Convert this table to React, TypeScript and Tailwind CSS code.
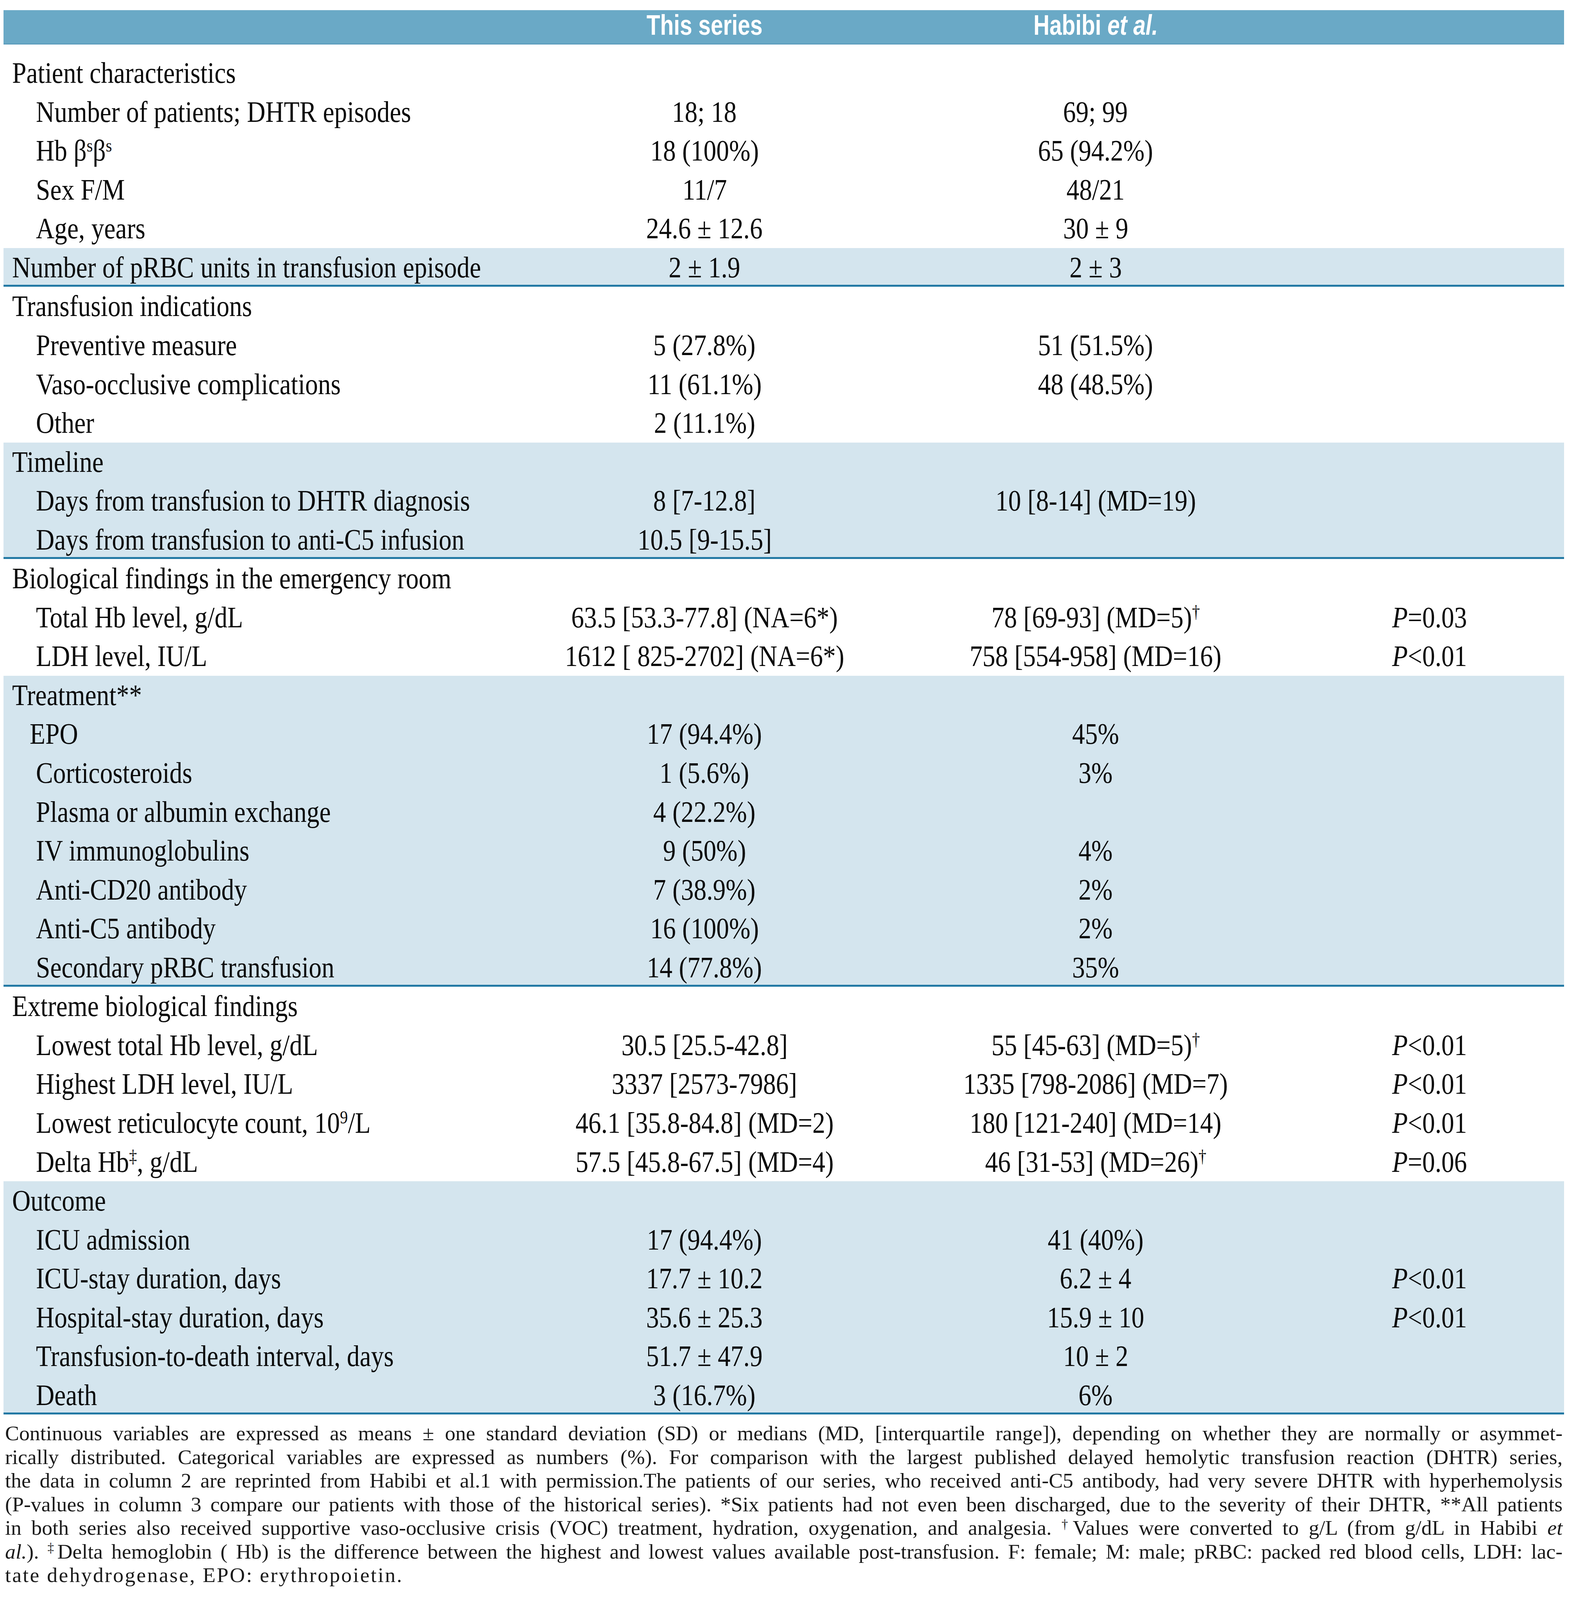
import type { ReactNode } from 'react';

type Row = {
  label: ReactNode;
  a?: ReactNode;
  b?: ReactNode;
  p?: ReactNode;
  level?: 'head' | 'sub' | 'epo';
};

type Section = { shaded?: boolean; rows: Row[] };

const Sup = ({ children }: { children: ReactNode }) => <sup className="text-[62%]">{children}</sup>;
const P = ({ children }: { children: ReactNode }) => (
  <>
    <i>P</i>
    {children}
  </>
);

const sections: Section[] = [
  {
    rows: [
      { label: 'Patient characteristics', level: 'head' },
      { label: 'Number of patients; DHTR episodes', a: '18; 18', b: '69; 99' },
      {
        label: (
          <>
            Hb β<Sup>s</Sup>β<Sup>s</Sup>
          </>
        ),
        a: '18 (100%)',
        b: '65 (94.2%)',
      },
      { label: 'Sex F/M', a: '11/7', b: '48/21' },
      { label: 'Age, years', a: '24.6 ± 12.6', b: '30 ± 9' },
    ],
  },
  {
    shaded: true,
    rows: [{ label: 'Number of pRBC units in transfusion episode', a: '2 ± 1.9', b: '2 ± 3', level: 'head' }],
  },
  {
    rows: [
      { label: 'Transfusion indications', level: 'head' },
      { label: 'Preventive measure', a: '5 (27.8%)', b: '51 (51.5%)' },
      { label: 'Vaso-occlusive complications', a: '11 (61.1%)', b: '48 (48.5%)' },
      { label: 'Other', a: '2 (11.1%)' },
    ],
  },
  {
    shaded: true,
    rows: [
      { label: 'Timeline', level: 'head' },
      { label: 'Days from transfusion to DHTR diagnosis', a: '8 [7-12.8]', b: '10 [8-14] (MD=19)' },
      { label: 'Days from transfusion to anti-C5 infusion', a: '10.5 [9-15.5]' },
    ],
  },
  {
    rows: [
      { label: 'Biological findings in the emergency room', level: 'head' },
      {
        label: 'Total Hb level, g/dL',
        a: '63.5 [53.3-77.8] (NA=6*)',
        b: (
          <>
            78 [69-93] (MD=5)<Sup>†</Sup>
          </>
        ),
        p: <P>=0.03</P>,
      },
      { label: 'LDH level, IU/L', a: '1612 [ 825-2702] (NA=6*)', b: '758 [554-958] (MD=16)', p: <P>&lt;0.01</P> },
    ],
  },
  {
    shaded: true,
    rows: [
      { label: 'Treatment**', level: 'head' },
      { label: 'EPO', a: '17 (94.4%)', b: '45%', level: 'epo' },
      { label: 'Corticosteroids', a: '1 (5.6%)', b: '3%' },
      { label: 'Plasma or albumin exchange', a: '4 (22.2%)' },
      { label: 'IV immunoglobulins', a: '9 (50%)', b: '4%' },
      { label: 'Anti-CD20 antibody', a: '7 (38.9%)', b: '2%' },
      { label: 'Anti-C5 antibody', a: '16 (100%)', b: '2%' },
      { label: 'Secondary pRBC transfusion', a: '14 (77.8%)', b: '35%' },
    ],
  },
  {
    rows: [
      { label: 'Extreme biological findings', level: 'head' },
      {
        label: 'Lowest total Hb level, g/dL',
        a: '30.5 [25.5-42.8]',
        b: (
          <>
            55 [45-63] (MD=5)<Sup>†</Sup>
          </>
        ),
        p: <P>&lt;0.01</P>,
      },
      { label: 'Highest LDH level, IU/L', a: '3337 [2573-7986]', b: '1335 [798-2086] (MD=7)', p: <P>&lt;0.01</P> },
      {
        label: (
          <>
            Lowest reticulocyte count, 10<Sup>9</Sup>/L
          </>
        ),
        a: '46.1 [35.8-84.8] (MD=2)',
        b: '180 [121-240] (MD=14)',
        p: <P>&lt;0.01</P>,
      },
      {
        label: (
          <>
            Delta Hb<Sup>‡</Sup>, g/dL
          </>
        ),
        a: '57.5 [45.8-67.5] (MD=4)',
        b: (
          <>
            46 [31-53] (MD=26)<Sup>†</Sup>
          </>
        ),
        p: <P>=0.06</P>,
      },
    ],
  },
  {
    shaded: true,
    rows: [
      { label: 'Outcome', level: 'head' },
      { label: 'ICU admission', a: '17 (94.4%)', b: '41 (40%)' },
      { label: 'ICU-stay duration, days', a: '17.7 ± 10.2', b: '6.2 ± 4', p: <P>&lt;0.01</P> },
      { label: 'Hospital-stay duration, days', a: '35.6 ± 25.3', b: '15.9 ± 10', p: <P>&lt;0.01</P> },
      { label: 'Transfusion-to-death interval, days', a: '51.7 ± 47.9', b: '10 ± 2' },
      { label: 'Death', a: '3 (16.7%)', b: '6%' },
    ],
  },
];

const notes: ReactNode[] = [
  <>Continuous variables are expressed as means ± one standard deviation (SD) or medians (MD, [interquartile range]), depending on whether they are normally or asymmet-</>,
  <>rically distributed. Categorical variables are expressed as numbers (%). For comparison with the largest published delayed hemolytic transfusion reaction (DHTR) series,</>,
  <>the data in column 2 are reprinted from Habibi et al.1 with permission.The patients of our series, who received anti-C5 antibody, had very severe DHTR with hyperhemolysis</>,
  <>(P-values in column 3 compare our patients with those of the historical series). *Six patients had not even been discharged, due to the severity of their DHTR, **All patients</>,
  <>
    in both series also received supportive vaso-occlusive crisis (VOC) treatment, hydration, oxygenation, and analgesia. <Sup>†</Sup>Values were converted to g/L (from g/dL in Habibi <i>et</i>
  </>,
  <>
    <i>al.</i>). <Sup>‡</Sup>Delta hemoglobin ( Hb) is the difference between the highest and lowest values available post-transfusion. F: female; M: male; pRBC: packed red blood cells, LDH: lac-
  </>,
  <>tate dehydrogenase, EPO: erythropoietin.</>,
];

const padFor = (level?: Row['level']) =>
  level === 'head' ? 'pl-[22px]' : level === 'epo' ? 'pl-[67px]' : 'pl-[83px]';

const TableRow = ({ row, first, last }: { row: Row; first: boolean; last: boolean }) => (
  <div
    className={`grid grid-cols-[1294px_1000px_1002px_698px] h-[99.56px] leading-[99.4px] ${first ? '-mt-[19px]' : ''} ${last ? '-mb-[5px]' : ''}`}
  >
    <div className={`min-w-0 whitespace-nowrap ${padFor(row.level)}`}>
      <span className="inline-block origin-left scale-x-[0.857]">{row.label}</span>
    </div>
    <div className="min-w-0 whitespace-nowrap text-center">
      <span className="inline-block scale-x-[0.857]">{row.a}</span>
    </div>
    <div className="min-w-0 whitespace-nowrap text-center">
      <span className="inline-block scale-x-[0.857]">{row.b}</span>
    </div>
    <div className="min-w-0 whitespace-nowrap pl-[258px]">
      <span className="inline-block origin-left scale-x-[0.857]">{row.p}</span>
    </div>
  </div>
);

export default function App() {
  return (
    <div className="w-[4031px] h-[4096px] overflow-hidden bg-white pt-[25.5px] text-[#0a0a0a] font-['Liberation_Serif','Times_New_Roman',serif]">
      <div className="ml-[9px] w-[3994px]">
        {/* column headings */}
        <div className="grid grid-cols-[1294px_1000px_1002px_698px] h-[88px] bg-[#6aa9c6] border-b-[3px] border-[#5d9dbd] leading-[75px] text-[72.8px] font-bold text-white font-['Liberation_Sans',Arial,sans-serif]">
          <div />
          <div className="text-center whitespace-nowrap">
            <span className="inline-block scale-x-[0.78]">This series</span>
          </div>
          <div className="text-center whitespace-nowrap">
            <span className="inline-block scale-x-[0.78]">
              Habibi <i>et al.</i>
            </span>
          </div>
          <div />
        </div>

        <div className="mt-[23.7px] text-[76.4px]">
          {sections.map((section, si) =>
            section.shaded ? (
              <div key={si} className="mt-[19px] bg-[#d4e5ee] border-b-[5px] border-[#2279a4]">
                {section.rows.map((row, ri) => (
                  <TableRow key={ri} row={row} first={ri === 0} last={ri === section.rows.length - 1} />
                ))}
              </div>
            ) : (
              <div key={si}>
                {section.rows.map((row, ri) => (
                  <TableRow key={ri} row={row} first={false} last={false} />
                ))}
              </div>
            ),
          )}
        </div>
      </div>

      {/* footnote: lines set to a fixed width, then widened slightly to the text block */}
      <div className="ml-[13px] mt-[18px] w-[3986px] text-[52.8px] leading-[60.5px] text-[#1a1a1a]">
        {notes.map((line, i) => (
          <div
            key={i}
            className={
              i < notes.length - 1
                ? 'w-[3908px] origin-left scale-x-[1.02] whitespace-nowrap text-justify [text-align-last:justify]'
                : 'w-[3908px] origin-left scale-x-[1.02] whitespace-nowrap text-left tracking-[0.06em]'
            }
          >
            {line}
          </div>
        ))}
      </div>
    </div>
  );
}
